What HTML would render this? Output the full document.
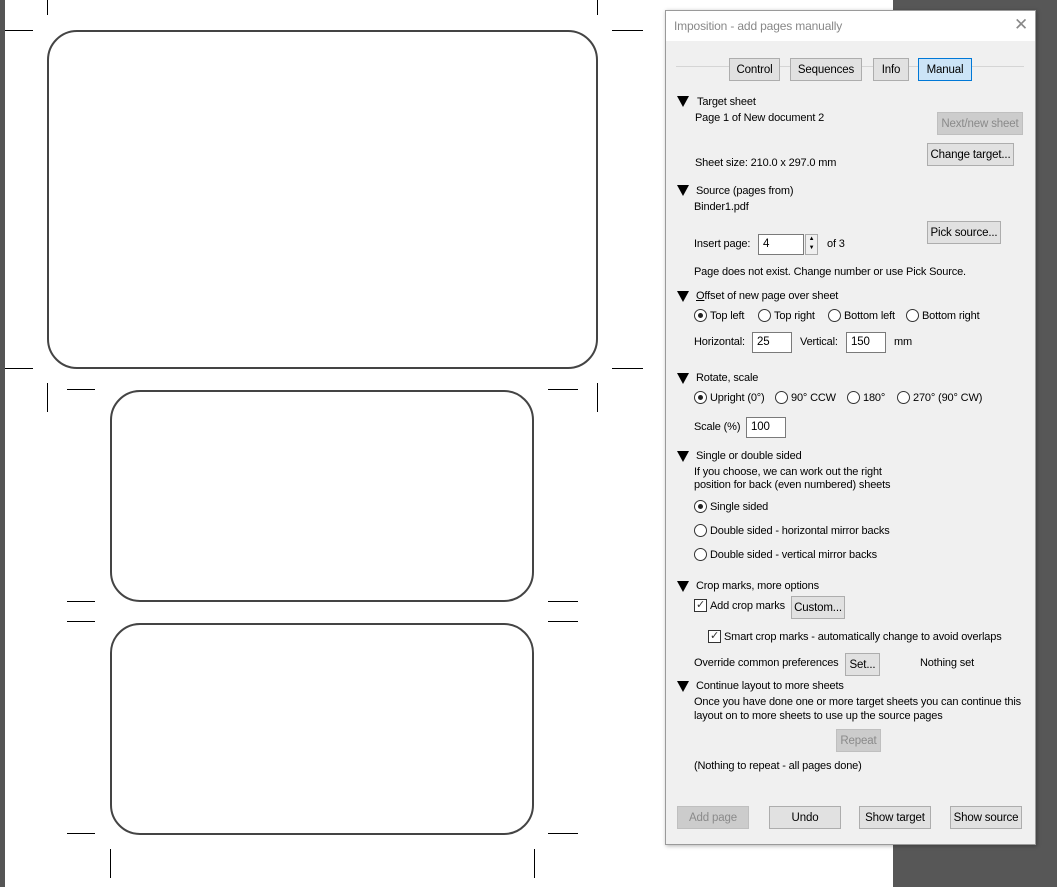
<!DOCTYPE html>
<html><head><meta charset="utf-8"><style>
*{margin:0;padding:0;box-sizing:border-box}
body{width:1057px;height:887px;position:relative;background:#fff;overflow:hidden;font-family:"Liberation Sans",sans-serif;font-size:11px;letter-spacing:-0.15px;color:#000}
.a{position:absolute;white-space:nowrap;margin-top:1px}
.h{position:absolute;height:1px;background:#000}
.v{position:absolute;width:1px;background:#000}
.pg{position:absolute;border:2px solid #444;border-radius:30px}
.btn{position:absolute;height:23px;border:1px solid #adadad;background:#e1e1e1;text-align:center;line-height:22px;font-size:11.5px;white-space:nowrap;overflow:hidden}
.dis{color:#8a8a8a;background:#cccccc;border-color:#bfbfbf}
.in{position:absolute;height:21px;border:1px solid #7a7a7a;background:#fff;padding-left:4px;line-height:19px;font-size:11.5px}
.tri{position:absolute;width:0;height:0;border-left:6px solid transparent;border-right:6px solid transparent;border-top:11px solid #000}
.r{position:absolute;width:13px;height:13px;border:1px solid #333;border-radius:50%;background:#fff}
.r.on::after{content:"";position:absolute;left:3px;top:3px;width:5px;height:5px;border-radius:50%;background:#222}
.cb{position:absolute;width:13px;height:13px;border:1px solid #333;background:#fff;font-size:11px;line-height:11px;text-align:center;color:#333}
</style></head><body>
<div style="position:absolute;left:0;top:0;width:5px;height:887px;background:#555"></div>
<div style="position:absolute;left:893px;top:0;width:164px;height:887px;background:#575757"></div>
<div class="pg" style="left:47px;top:30px;width:551px;height:339px"></div>
<div class="pg" style="left:110px;top:390px;width:424px;height:212px"></div>
<div class="pg" style="left:110px;top:623px;width:424px;height:212px"></div>
<div class="v" style="left:47px;top:0;height:15px"></div>
<div class="v" style="left:597px;top:0;height:15px"></div>
<div class="h" style="left:5px;top:30px;width:28px"></div>
<div class="h" style="left:612px;top:30px;width:31px"></div>
<div class="h" style="left:5px;top:368px;width:28px"></div>
<div class="h" style="left:612px;top:368px;width:31px"></div>
<div class="v" style="left:47px;top:383px;height:29px"></div>
<div class="v" style="left:597px;top:383px;height:29px"></div>
<div class="h" style="left:67px;top:389px;width:28px"></div>
<div class="h" style="left:548px;top:389px;width:30px"></div>
<div class="h" style="left:67px;top:601px;width:28px"></div>
<div class="h" style="left:548px;top:601px;width:30px"></div>
<div class="h" style="left:67px;top:621px;width:28px"></div>
<div class="h" style="left:548px;top:621px;width:30px"></div>
<div class="h" style="left:67px;top:833px;width:28px"></div>
<div class="h" style="left:548px;top:833px;width:30px"></div>
<div class="v" style="left:110px;top:849px;height:29px"></div>
<div class="v" style="left:534px;top:849px;height:29px"></div>
<div style="position:absolute;left:665px;top:10px;width:371px;height:835px;background:#f0f0f0;border:1px solid #9a9a9a;box-shadow:1px 1px 4px rgba(0,0,0,.3)"></div>
<div style="position:absolute;left:666px;top:11px;width:369px;height:30px;background:#fff"></div>
<div class="a" style="left:674px;top:18px;font-size:12px;color:#888">Imposition - add pages manually</div>
<div class="a" style="left:1014px;top:14px;font-size:17px;color:#888">✕</div>
<div class="h" style="left:676px;top:66px;width:348px;background:#d5d5d5"></div>
<div class="btn" style="left:729px;top:58px;width:51px">Control</div>
<div class="btn" style="left:790px;top:58px;width:72px">Sequences</div>
<div class="btn" style="left:873px;top:58px;width:36px">Info</div>
<div class="btn" style="left:918px;top:58px;width:54px;background:#cce4f7;border-color:#0078d7">Manual</div>

<div class="tri" style="left:677px;top:96px"></div>
<div class="a" style="left:697px;top:95px">Target sheet</div>
<div class="a" style="left:695px;top:111px">Page 1 of New document 2</div>
<div class="btn dis" style="left:937px;top:112px;width:86px">Next/new sheet</div>
<div class="btn" style="left:927px;top:143px;width:87px">Change target...</div>
<div class="a" style="left:695px;top:156px">Sheet size: 210.0 x 297.0 mm</div>

<div class="tri" style="left:677px;top:185px"></div>
<div class="a" style="left:696px;top:184px">Source (pages from)</div>
<div class="a" style="left:694px;top:200px">Binder1.pdf</div>
<div class="btn" style="left:927px;top:221px;width:74px">Pick source...</div>
<div class="a" style="left:694px;top:237px">Insert page:</div>
<div class="in" style="left:758px;top:234px;width:46px">4</div>
<div style="position:absolute;left:805px;top:234px;width:13px;height:21px;border:1px solid #aaa;background:#f0f0f0;font-size:6px;line-height:9px;text-align:center">▲<br>▼</div>
<div class="a" style="left:827px;top:237px">of 3</div>
<div class="a" style="left:694px;top:265px">Page does not exist. Change number or use Pick Source.</div>

<div class="tri" style="left:677px;top:291px"></div>
<div class="a" style="left:696px;top:289px"><u>O</u>ffset of new page over sheet</div>
<div class="r on" style="left:694px;top:309px"></div><div class="a" style="left:710px;top:309px">Top left</div>
<div class="r" style="left:758px;top:309px"></div><div class="a" style="left:774px;top:309px">Top right</div>
<div class="r" style="left:828px;top:309px"></div><div class="a" style="left:844px;top:309px">Bottom left</div>
<div class="r" style="left:906px;top:309px"></div><div class="a" style="left:922px;top:309px">Bottom right</div>
<div class="a" style="left:694px;top:335px">Horizontal:</div>
<div class="in" style="left:752px;top:332px;width:40px">25</div>
<div class="a" style="left:800px;top:335px">Vertical:</div>
<div class="in" style="left:846px;top:332px;width:40px">150</div>
<div class="a" style="left:894px;top:335px">mm</div>

<div class="tri" style="left:677px;top:373px"></div>
<div class="a" style="left:696px;top:371px">Rotate, scale</div>
<div class="r on" style="left:694px;top:391px"></div><div class="a" style="left:710px;top:391px">Upright (0°)</div>
<div class="r" style="left:775px;top:391px"></div><div class="a" style="left:791px;top:391px">90° CCW</div>
<div class="r" style="left:847px;top:391px"></div><div class="a" style="left:863px;top:391px">180°</div>
<div class="r" style="left:897px;top:391px"></div><div class="a" style="left:913px;top:391px">270° (90° CW)</div>
<div class="a" style="left:694px;top:420px">Scale (%)</div>
<div class="in" style="left:746px;top:417px;width:40px">100</div>

<div class="tri" style="left:677px;top:451px"></div>
<div class="a" style="left:696px;top:449px">Single or double sided</div>
<div class="a" style="left:694px;top:465px">If you choose, we can work out the right</div>
<div class="a" style="left:694px;top:478px">position for back (even numbered) sheets</div>
<div class="r on" style="left:694px;top:500px"></div><div class="a" style="left:710px;top:500px">Single sided</div>
<div class="r" style="left:694px;top:524px"></div><div class="a" style="left:710px;top:524px">Double sided - horizontal mirror backs</div>
<div class="r" style="left:694px;top:548px"></div><div class="a" style="left:710px;top:548px">Double sided - vertical mirror backs</div>

<div class="tri" style="left:677px;top:581px"></div>
<div class="a" style="left:696px;top:579px">Crop marks, more options</div>
<div class="cb" style="left:694px;top:599px">✓</div><div class="a" style="left:710px;top:599px">Add crop marks</div>
<div class="btn" style="left:791px;top:596px;width:54px">Custom...</div>
<div class="cb" style="left:708px;top:630px">✓</div><div class="a" style="left:724px;top:630px">Smart crop marks - automatically change to avoid overlaps</div>
<div class="a" style="left:694px;top:656px">Override common preferences</div>
<div class="btn" style="left:845px;top:653px;width:35px">Set...</div>
<div class="a" style="left:920px;top:656px">Nothing set</div>

<div class="tri" style="left:677px;top:681px"></div>
<div class="a" style="left:696px;top:679px">Continue layout to more sheets</div>
<div class="a" style="left:694px;top:695px">Once you have done one or more target sheets you can continue this</div>
<div class="a" style="left:694px;top:709px">layout on to more sheets to use up the source pages</div>
<div class="btn dis" style="left:836px;top:729px;width:45px">Repeat</div>
<div class="a" style="left:694px;top:759px">(Nothing to repeat - all pages done)</div>

<div class="btn dis" style="left:677px;top:806px;width:72px">Add page</div>
<div class="btn" style="left:769px;top:806px;width:72px">Undo</div>
<div class="btn" style="left:859px;top:806px;width:72px">Show target</div>
<div class="btn" style="left:950px;top:806px;width:72px">Show source</div>
</body></html>
